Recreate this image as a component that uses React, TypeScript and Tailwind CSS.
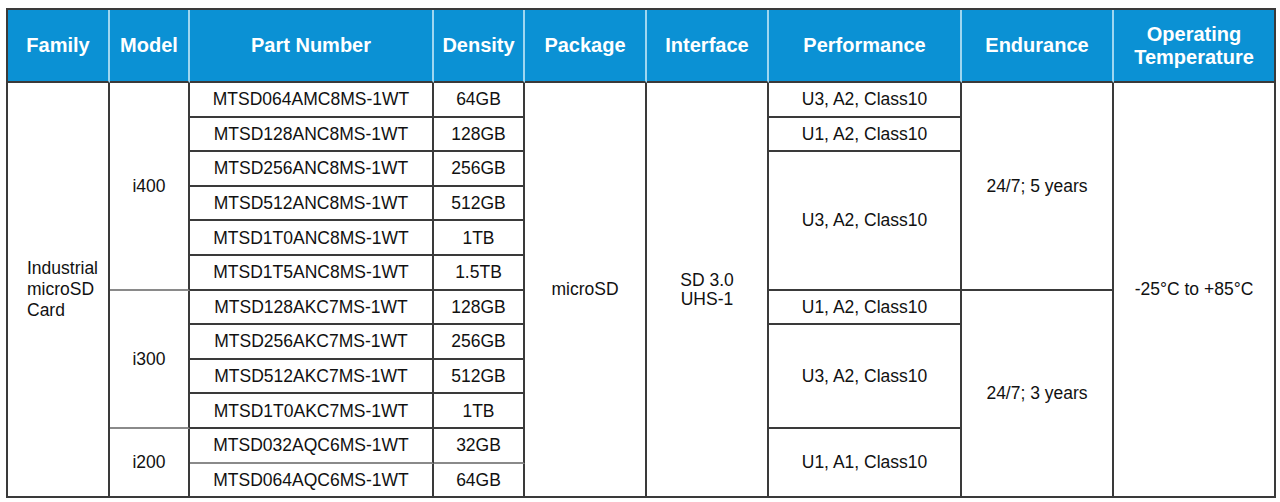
import React from "react";

const B = "border-r-2 border-b-2 border-[#3a3a3a]";
const td = `${B} text-center align-middle p-0`;

type Row = {
  part: string;
  density: string;
  grayBottom?: boolean;
};

const rows: Row[] = [
  { part: "MTSD064AMC8MS-1WT", density: "64GB" },
  { part: "MTSD128ANC8MS-1WT", density: "128GB" },
  { part: "MTSD256ANC8MS-1WT", density: "256GB" },
  { part: "MTSD512ANC8MS-1WT", density: "512GB" },
  { part: "MTSD1T0ANC8MS-1WT", density: "1TB" },
  { part: "MTSD1T5ANC8MS-1WT", density: "1.5TB" },
  { part: "MTSD128AKC7MS-1WT", density: "128GB" },
  { part: "MTSD256AKC7MS-1WT", density: "256GB" },
  { part: "MTSD512AKC7MS-1WT", density: "512GB" },
  { part: "MTSD1T0AKC7MS-1WT", density: "1TB" },
  { part: "MTSD032AQC6MS-1WT", density: "32GB", grayBottom: true },
  { part: "MTSD064AQC6MS-1WT", density: "64GB" },
];

const model: Record<number, [string, number, boolean]> = {
  0: ["i400", 6, true],
  6: ["i300", 4, true],
  10: ["i200", 2, false],
};

const perf: Record<number, [string, number]> = {
  0: ["U3, A2, Class10", 1],
  1: ["U1, A2, Class10", 1],
  2: ["U3, A2, Class10", 4],
  6: ["U1, A2, Class10", 1],
  7: ["U3, A2, Class10", 3],
  10: ["U1, A1, Class10", 2],
};

const endu: Record<number, [string, number]> = {
  0: ["24/7; 5 years", 6],
  6: ["24/7; 3 years", 6],
};

const hdr =
  "border-r-2 border-b-2 border-r-[#9fd6f0] border-b-[#3a3a3a] text-white font-bold text-[20px] text-center align-middle p-0 leading-[23px]";

export default function App() {
  return (
    <div className="w-[1280px] h-[502px] bg-white pt-[8px] pl-[6px] font-['Liberation_Sans',Arial,sans-serif]">
      <table className="table-fixed border-separate border-spacing-0 border-l-2 border-t-2 border-[#3a3a3a] w-[1268px] text-[17.5px] text-[#111] font-['Liberation_Sans',Arial,sans-serif]">
        <colgroup>
          <col className="w-[102px]" />
          <col className="w-[80px]" />
          <col className="w-[244px]" />
          <col className="w-[91px]" />
          <col className="w-[122px]" />
          <col className="w-[122px]" />
          <col className="w-[193px]" />
          <col className="w-[152px]" />
          <col className="w-[162px]" />
        </colgroup>
        <thead>
          <tr className="h-[73px] bg-[#0b91d4]">
            <th className={hdr}>Family</th>
            <th className={hdr}>Model</th>
            <th className={hdr}>Part Number</th>
            <th className={hdr}>Density</th>
            <th className={hdr}>Package</th>
            <th className={hdr}>Interface</th>
            <th className={hdr}>Performance</th>
            <th className={hdr}>Endurance</th>
            <th className="border-r-2 border-b-2 border-[#3a3a3a] text-white font-bold text-[20px] text-center align-middle p-0 leading-[23px]">
              Operating
              <br />
              Temperature
            </th>
          </tr>
        </thead>
        <tbody>
          {rows.map((r, i) => (
            <tr key={i} className="h-[34.6px]">
              {i === 0 && (
                <td
                  rowSpan={12}
                  className={`${B} text-left align-middle pl-[19px] pr-0 leading-[21px]`}
                >
                  Industrial
                  <br />
                  microSD
                  <br />
                  Card
                </td>
              )}
              {model[i] && (
                <td
                  rowSpan={model[i][1]}
                  className={`border-r-2 border-r-[#3a3a3a] border-b-2 ${
                    model[i][2] ? "border-b-[#8a8a8a]" : "border-b-[#3a3a3a]"
                  } text-center align-middle p-0`}
                >
                  {model[i][0]}
                </td>
              )}
              <td
                className={`border-r-2 border-r-[#3a3a3a] border-b-2 ${
                  r.grayBottom ? "border-b-[#8a8a8a]" : "border-b-[#3a3a3a]"
                } text-center align-middle p-0`}
              >
                {r.part}
              </td>
              <td
                className={`border-r-2 border-r-[#3a3a3a] border-b-2 ${
                  r.grayBottom ? "border-b-[#8a8a8a]" : "border-b-[#3a3a3a]"
                } text-center align-middle p-0`}
              >
                {r.density}
              </td>
              {i === 0 && (
                <td rowSpan={12} className={td}>
                  microSD
                </td>
              )}
              {i === 0 && (
                <td rowSpan={12} className={`${td} leading-[19px]`}>
                  SD 3.0
                  <br />
                  UHS-1
                </td>
              )}
              {perf[i] && (
                <td rowSpan={perf[i][1]} className={td}>
                  {perf[i][0]}
                </td>
              )}
              {endu[i] && (
                <td rowSpan={endu[i][1]} className={td}>
                  {endu[i][0]}
                </td>
              )}
              {i === 0 && (
                <td rowSpan={12} className={td}>
                  -25°C to +85°C
                </td>
              )}
            </tr>
          ))}
        </tbody>
      </table>
    </div>
  );
}
